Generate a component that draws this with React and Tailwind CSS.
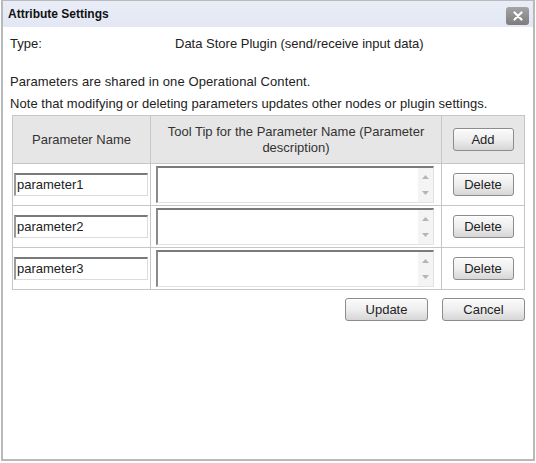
import React from "react";

const params = ["parameter1", "parameter2", "parameter3"];

function GrayButton({ label, wide }) {
  return (
    <button
      className={`${wide ? "w-[83px]" : "w-[61px]"} h-[23px] rounded-[3px] border border-[#8c8c8c] bg-gradient-to-b from-[#fbfbfb] via-[#eeeeee] to-[#d6d6d6] text-[13px] leading-none text-[#222] shadow-[inset_0_1px_0_#fff]`}
    >
      {label}
    </button>
  );
}

function TextBox({ value }) {
  return (
    <div className="ml-[1px] w-[134px] h-[23px] border-t-2 border-l-2 border-t-[#7a7a7a] border-l-[#9a9a9a] border-r border-b border-r-[#dcdcdc] border-b-[#dcdcdc] bg-white flex items-center pl-[1px] text-[13px] text-[#222]">
      {value}
    </div>
  );
}

function TextArea() {
  return (
    <div className="ml-[5px] w-[278px] h-[37px] border-t-2 border-l-2 border-t-[#7a7a7a] border-l-[#8a8a8a] border-r border-b border-r-[#e2e2e2] border-b-[#e2e2e2] bg-white flex justify-end">
      <div className="w-[15px] h-full bg-[#f4f4f4] flex flex-col items-center justify-between py-[7px]">
        <svg width="7" height="4" viewBox="0 0 7 4">
          <path d="M0 4 L3.5 0 L7 4 Z" fill="#b5b5b5" />
        </svg>
        <svg width="7" height="4" viewBox="0 0 7 4">
          <path d="M0 0 L3.5 4 L7 0 Z" fill="#b5b5b5" />
        </svg>
      </div>
    </div>
  );
}

export default function App() {
  return (
    <div className="w-[536px] h-[463px] bg-white font-['Liberation_Sans',Arial,sans-serif]">
      <div className="ml-[1px] w-[534px] h-[461px] border-t border-x-2 border-b-2 border-[#b9b9b9] flex flex-col">
        {/* Title bar */}
        <div className="h-[26px] shrink-0 bg-gradient-to-b from-[#e9edf7] to-[#e2e7f3] flex items-center justify-between pl-[5px] pr-[4px]">
          <span className="text-[12px] font-bold text-[#111]">Attribute Settings</span>
          <div className="w-[23px] h-[18px] mt-[3px] rounded-[3px] bg-gradient-to-b from-[#a4a4a4] to-[#7c7c7c] flex items-center justify-center">
            <svg width="10" height="10" viewBox="0 0 10 10">
              <path d="M1.5 1.5 L8.5 8.5 M8.5 1.5 L1.5 8.5" stroke="#fff" strokeWidth="2.2" strokeLinecap="round" />
            </svg>
          </div>
        </div>

        {/* Body */}
        <div className="pl-[7px] text-[13px] text-[#222]">
          <div className="flex mt-[9px] leading-[16px]">
            <span className="w-[165px]">Type:</span>
            <span>Data Store Plugin (send/receive input data)</span>
          </div>
          <p className="mt-[22px] leading-[16px] tracking-[0.1px]">Parameters are shared in one Operational Content.</p>
          <p className="mt-[6px] leading-[16px] tracking-[0.05px]">
            Note that modifying or deleting parameters updates other nodes or plugin settings.
          </p>

          {/* Table */}
          <div className="ml-[2px] mt-[3px] w-[513px] border border-[#c6c6c6] grid grid-cols-[138px_291px_82px]">
            <div className="h-[48px] bg-[#e6e6e6] border-r border-b border-[#c6c6c6] flex items-center justify-center text-[#333]">
              Parameter Name
            </div>
            <div className="h-[48px] bg-[#e6e6e6] border-r border-b border-[#c6c6c6] flex items-center justify-center text-center leading-[16px] text-[#333] px-[10px]">
              Tool Tip for the Parameter Name (Parameter description)
            </div>
            <div className="h-[48px] bg-[#e6e6e6] border-b border-[#c6c6c6] flex items-center justify-center">
              <GrayButton label="Add" />
            </div>

            {params.map((p, i) => (
              <React.Fragment key={p}>
                <div className={`border-r border-[#c6c6c6] flex items-center ${i < 2 ? "h-[42px] border-b" : "h-[41px]"}`}>
                  <TextBox value={p} />
                </div>
                <div className={`border-r border-[#c6c6c6] flex items-center ${i < 2 ? "h-[42px] border-b" : "h-[41px]"}`}>
                  <TextArea />
                </div>
                <div className={`border-[#c6c6c6] flex items-center justify-center ${i < 2 ? "h-[42px] border-b" : "h-[41px]"}`}>
                  <GrayButton label="Delete" />
                </div>
              </React.Fragment>
            ))}
          </div>

          <div className="w-[515px] mt-[8px] flex justify-end gap-[14px]">
            <GrayButton label="Update" wide />
            <GrayButton label="Cancel" wide />
          </div>
        </div>
      </div>
    </div>
  );
}
